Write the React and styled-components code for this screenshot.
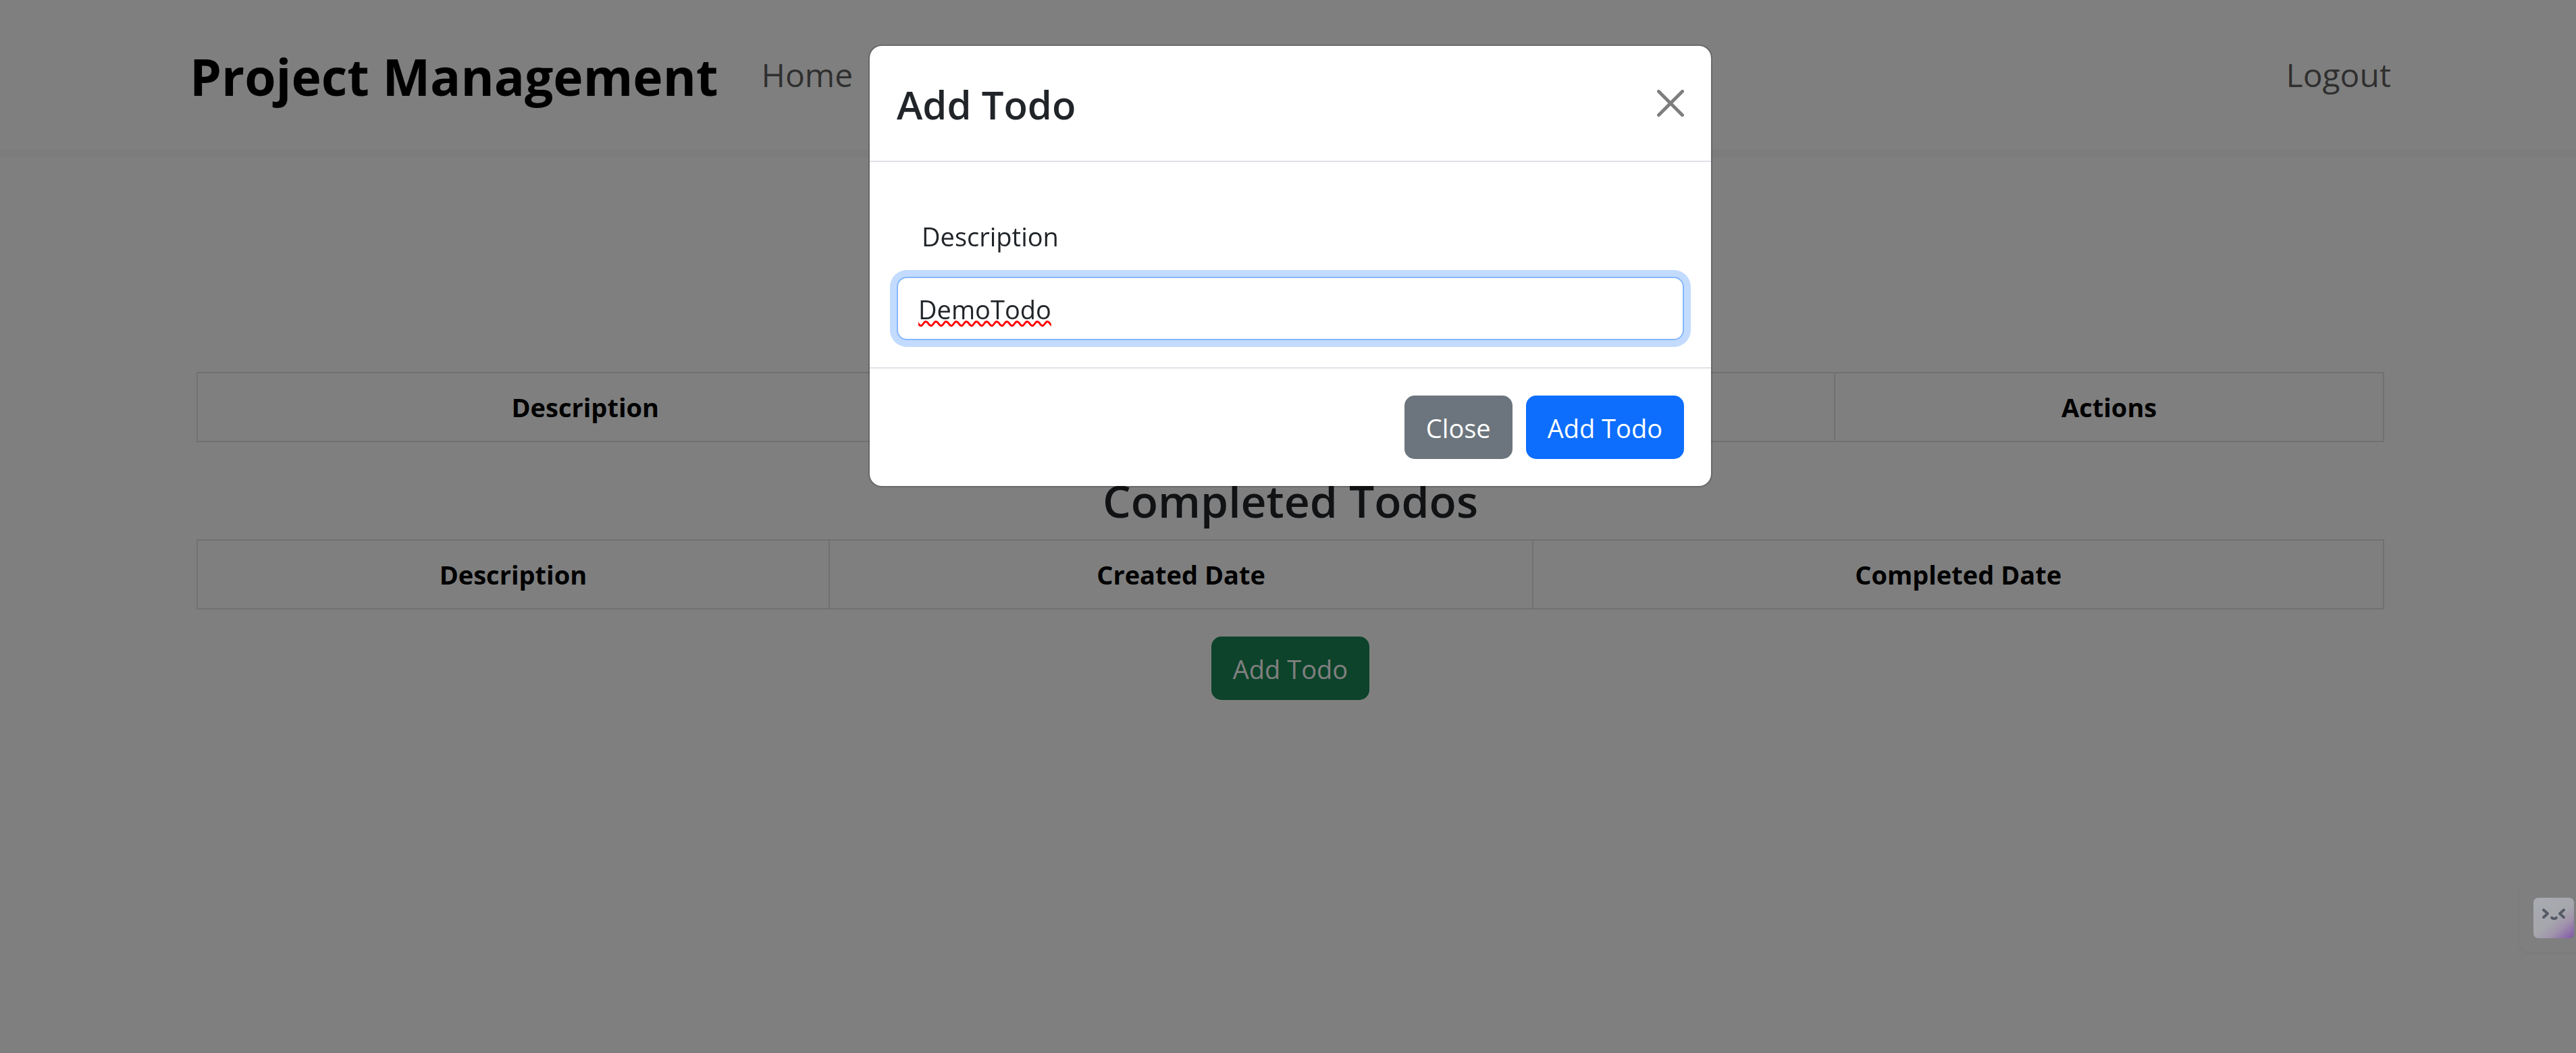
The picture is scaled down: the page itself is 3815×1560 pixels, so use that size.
import React, { useState } from "react";
import styled, { createGlobalStyle } from "styled-components";

const GlobalStyle = createGlobalStyle`
  *, *::before, *::after { box-sizing: border-box; }
  body {
    margin: 0;
    background: #fff;
    color: #212529;
    font-family: "Segoe UI", "Open Sans", "Noto Sans", sans-serif;
    font-size: 38px;
    line-height: 60px;
  }
  button, input { font: inherit; }
`;

const Page = styled.div`
  min-height: 100vh;
  padding-left: 7px;
`;

const Navbar = styled.header`
  margin-left: -7px;
  padding-left: 7px;
  border-bottom: 12px solid #f8f8f8;
`;

const NavInner = styled.nav`
  display: flex;
  align-items: center;
  gap: 64px;
  max-width: 3260px;
  height: 221px;
  margin: 0 auto;
`;

const Brand = styled.a`
  padding-top: 4px;
  color: #000;
  font-size: 75px;
  font-weight: 700;
  line-height: 120px;
  text-decoration: none;
`;

const NavLink = styled.a`
  color: rgba(0, 0, 0, 0.65);
  font-size: 48px;
  line-height: 76px;
  text-decoration: none;
  margin-left: ${(p) => (p.$end ? "auto" : "0")};
`;

const Main = styled.main`
  display: flex;
  flex-direction: column;
  align-items: center;
  max-width: 3240px;
  margin: 0 auto;
  padding-top: 318px;
`;

const SectionTitle = styled.h3`
  margin: 0 0 16px;
  padding-top: 4px;
  font-size: 66px;
  font-weight: 600;
  line-height: 84px;
`;

const Table = styled.table`
  width: 100%;
  margin-bottom: 40px;
  border-collapse: collapse;
  table-layout: fixed;
  color: #000;
`;

const Col = styled.col`
  width: ${(p) => p.$width};
`;

const Th = styled.th`
  padding: 20px;
  border: 2px solid #dee2e6;
  font-weight: 700;
  text-align: center;
`;

const colors = {
  success: "#198754",
  secondary: "#6c757d",
  primary: "#0d6efd",
};

const Button = styled.button`
  padding: 16px 30px 14px;
  border: 2px solid ${(p) => colors[p.$variant]};
  border-radius: 15px;
  background: ${(p) => colors[p.$variant]};
  color: #fff;
`;

const Backdrop = styled.div`
  position: fixed;
  inset: 0;
  padding: 66px 0 0 7px;
  background: rgba(0, 0, 0, 0.5);
`;

const Modal = styled.section`
  max-width: 1250px;
  margin: 0 auto;
  border: 2px solid rgba(0, 0, 0, 0.175);
  border-radius: 20px;
  background: #fff;
  background-clip: padding-box;
`;

const ModalHeader = styled.header`
  display: flex;
  align-items: center;
  justify-content: space-between;
  padding: 42px 40px 38px;
  border-bottom: 2px solid #dee2e6;
`;

const ModalTitle = styled.h4`
  margin: 0;
  font-size: 58px;
  font-weight: 600;
  line-height: 90px;
`;

const CloseIcon = styled.button`
  display: flex;
  padding: 0;
  border: 0;
  background: none;
  opacity: 0.5;
  margin-bottom: 4px;
`;

const ModalBody = styled.div`
  display: flex;
  flex-direction: column;
  padding: 80px 40px 40px;
`;

const Label = styled.label`
  margin-bottom: 30px;
  padding-left: 37px;
`;

const TextInput = styled.input`
  width: 100%;
  height: 94px;
  padding: 16px 30px 14px;
  border: 2px solid #86b7fe;
  border-radius: 15px;
  outline: 0;
  background: #fff;
  box-shadow: 0 0 0 10px #c2dbfe;
  color: #212529;
  text-decoration: underline wavy #f00 3px;
  text-decoration-skip-ink: none;
`;

const ModalFooter = styled.footer`
  display: flex;
  justify-content: flex-end;
  gap: 20px;
  padding: 40px;
  border-top: 2px solid #dee2e6;
`;

const Assistant = styled.aside`
  position: fixed;
  right: 0;
  top: 1309px;
  display: flex;
  padding: 21px 3px 20px 20px;
  border-radius: 14px 0 0 14px;
  background: #7f7f7f;
  box-shadow: 0 2px 8px rgba(0, 0, 0, 0.05);
`;

const AssistantButton = styled.button`
  display: flex;
  width: 60px;
  height: 60px;
  padding: 0;
  border: 0;
  border-radius: 7px;
  background: linear-gradient(140deg, #a8abb0 0%, #a6a7ad 52%, #a092ac 72%, #8155a8 100%);
`;

function HeaderTable({ columns }) {
  return (
    <Table>
      <colgroup>
        {columns.map(([name, width]) => (
          <Col key={name} $width={width} />
        ))}
      </colgroup>
      <thead>
        <tr>
          {columns.map(([name]) => (
            <Th key={name} scope="col">{name}</Th>
          ))}
        </tr>
      </thead>
    </Table>
  );
}

export default function App() {
  const [description, setDescription] = useState("DemoTodo");

  return (
    <>
      <GlobalStyle />
      <Page>
        <Navbar>
          <NavInner>
            <Brand href="#">Project Management</Brand>
            <NavLink href="#home">Home</NavLink>
            <NavLink href="#logout" $end>Logout</NavLink>
          </NavInner>
        </Navbar>
        <Main>
          <HeaderTable
            columns={[["Description", "35.5%"], ["", "39.4%"], ["Actions", "25.1%"]]}
          />
          <SectionTitle>Completed Todos</SectionTitle>
          <HeaderTable
            columns={[["Description", "28.9%"], ["Created Date", "32.2%"], ["Completed Date", "38.9%"]]}
          />
          <Button type="button" $variant="success">Add Todo</Button>
        </Main>
      </Page>
      <Backdrop>
        <Modal role="dialog" aria-labelledby="add-todo-title">
          <ModalHeader>
            <ModalTitle id="add-todo-title">Add Todo</ModalTitle>
            <CloseIcon type="button" aria-label="Close">
              <svg width="40" height="40" viewBox="0 0 16 16" fill="#000">
                <path d="M.293.293a1 1 0 0 1 1.414 0L8 6.586 14.293.293a1 1 0 1 1 1.414 1.414L9.414 8l6.293 6.293a1 1 0 0 1-1.414 1.414L8 9.414l-6.293 6.293a1 1 0 0 1-1.414-1.414L6.586 8 .293 1.707a1 1 0 0 1 0-1.414z" />
              </svg>
            </CloseIcon>
          </ModalHeader>
          <ModalBody>
            <Label htmlFor="description">Description</Label>
            <TextInput
              id="description"
              type="text"
              spellCheck={false}
              value={description}
              onChange={(e) => setDescription(e.target.value)}
            />
          </ModalBody>
          <ModalFooter>
            <Button type="button" $variant="secondary">Close</Button>
            <Button type="button" $variant="primary">Add Todo</Button>
          </ModalFooter>
        </Modal>
      </Backdrop>
      <Assistant>
        <AssistantButton type="button" aria-label="Assistant">
          <svg width="60" height="60" viewBox="0 0 60 60" fill="none" stroke="#555b66" strokeWidth="4" strokeLinecap="round" strokeLinejoin="round">
            <path d="M15 18l6 5.500-6 5.500M45 18l-6 5.500 6 5.500M27 29.500c1.500 2 5.500 2 7 0" />
          </svg>
        </AssistantButton>
      </Assistant>
    </>
  );
}
